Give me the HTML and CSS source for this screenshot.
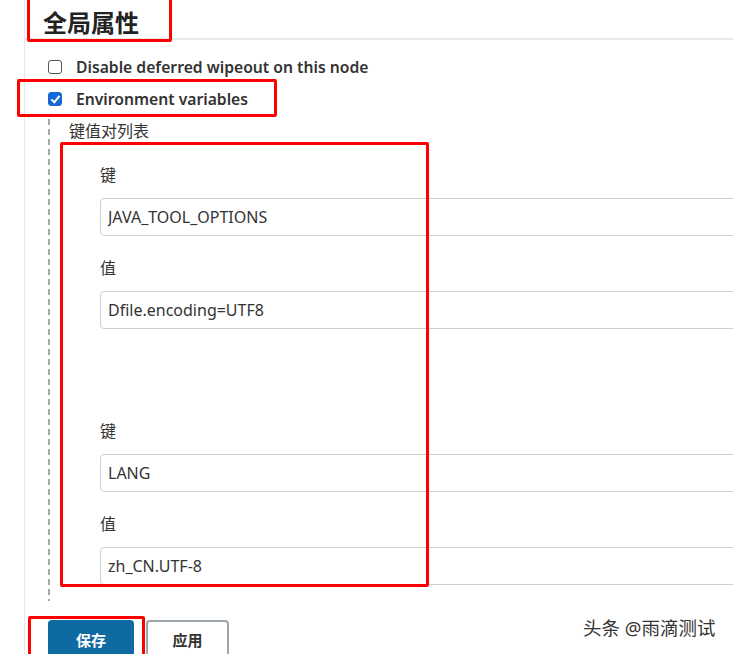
FILE: index.html
```html
<!DOCTYPE html>
<html lang="zh-CN">
  <head>
    <meta charset="utf-8">
    <link rel="stylesheet" href="styles.css">
  </head>
  <body>
    <div class="page">
      <div class="section">
        <h2 class="sectionTitle">全局属性</h2>
        <div class="checkRow">
          <input type="checkbox" id="wipeout">
          <label for="wipeout">Disable deferred wipeout on this node</label>
        </div>
        <div class="checkRow">
          <input type="checkbox" id="envVars" checked>
          <label for="envVars">Environment variables</label>
        </div>
        <div class="nested">
          <div class="nestedTitle">键值对列表</div>
          <div class="pair">
            <div class="fieldLabel">键</div>
            <input class="textInput" type="text" value="JAVA_TOOL_OPTIONS">
            <div class="fieldLabel value">值</div>
            <input class="textInput" type="text" value="Dfile.encoding=UTF8">
          </div>
          <div class="pair">
            <div class="fieldLabel">键</div>
            <input class="textInput" type="text" value="LANG">
            <div class="fieldLabel value">值</div>
            <input class="textInput" type="text" value="zh_CN.UTF-8">
          </div>
        </div>
      </div>
      <div class="buttonBar">
        <button class="btn primary">保存</button>
        <button class="btn">应用</button>
      </div>
    </div>

    <!-- annotation boxes drawn over the form -->
    <div class="mark markTitle"></div>
    <div class="mark markEnv"></div>
    <div class="mark markPairs"></div>
    <div class="mark markSave"></div>

    <div class="watermark">头条 @雨滴测试</div>
  </body>
</html>
```

FILE: styles.css
```css
html, body {
  margin: 0;
  height: 100%;
  overflow: hidden;
  background: #ffffff;
}
body {
  position: relative;
  color: #333333;
  font-family: "Noto Sans", "Noto Sans CJK SC", sans-serif;
}
.page {
  margin-left: 24px;
  min-height: 100%;
  border-left: 1px solid #e3e8ef;
}
.sectionTitle {
  margin: 0;
  padding: 8px 0 0 18px;
  font-size: 24px;
  line-height: 30px;
  font-weight: bold;
  color: #222222;
  border-bottom: 2px solid #e9e9e9;
}

.checkRow {
  display: flex;
  align-items: center;
  gap: 14px;
  height: 32px;
  padding-left: 23px;
  font-size: 15.7px;
  font-weight: 600;
}
.checkRow:first-of-type {
  margin-top: 11px;
}
.checkRow input {
  appearance: none;
  -webkit-appearance: none;
  position: relative;
  margin: 0;
  width: 14px;
  height: 14px;
  box-sizing: border-box;
  border: 1.5px solid #555555;
  border-radius: 3px;
  background: #ffffff;
}
.checkRow input:checked {
  border-color: #1469d6;
  background: #1469d6;
}
.checkRow input:checked::after {
  content: "";
  position: absolute;
  left: 3.5px;
  top: 0.5px;
  width: 3px;
  height: 7px;
  border: solid #ffffff;
  border-width: 0 2px 2px 0;
  transform: rotate(40deg);
}

.nested {
  margin: 4px 0 0 23px;
  padding: 0 0 16px 21px;
  background: repeating-linear-gradient(to bottom, #a9a9a9 0 6px, transparent 6px 10px) left top / 2px 100% no-repeat;
}
.nestedTitle {
  font-size: 16px;
  line-height: 24px;
}
.pair {
  padding-left: 31px;
  margin-top: 20px;
}
.pair + .pair {
  margin-top: 90px;
}
.fieldLabel {
  font-size: 16px;
  line-height: 24px;
  margin-bottom: 11px;
}
.fieldLabel.value {
  margin-top: 20px;
}
.textInput {
  display: block;
  box-sizing: border-box;
  width: 700px;
  height: 38px;
  padding: 0 7px;
  border: 1px solid #cfcfcf;
  border-radius: 4px;
  font-family: inherit;
  font-size: 16px;
  color: #333333;
  background: #ffffff;
}

.buttonBar {
  display: flex;
  gap: 12px;
  margin: 19px 0 0 23px;
}
.btn {
  height: 38px;
  width: 83px;
  box-sizing: border-box;
  border: 2px solid #9ba6ad;
  border-radius: 4px;
  background: #ffffff;
  color: #333333;
  font-family: inherit;
  font-size: 15px;
  font-weight: bold;
}
.btn.primary {
  width: 86px;
  border-color: #0f6aa1;
  background: #0f6aa1;
  color: #ffffff;
}

.mark {
  position: absolute;
  border: 3px solid #ff0000;
  border-radius: 2px;
}
.markTitle {
  left: 27px;
  top: -6px;
  width: 139px;
  height: 42px;
}
.markEnv {
  left: 17px;
  top: 79px;
  width: 254px;
  height: 32px;
}
.markPairs {
  left: 60px;
  top: 142px;
  width: 363px;
  height: 439px;
}
.markSave {
  left: 28px;
  top: 616px;
  width: 111px;
  height: 50px;
}

.watermark {
  position: absolute;
  left: 583px;
  top: 616px;
  font-size: 18.5px;
  line-height: 24px;
  color: #333333;
  text-shadow: 0 0 2px #ffffff;
}
```
